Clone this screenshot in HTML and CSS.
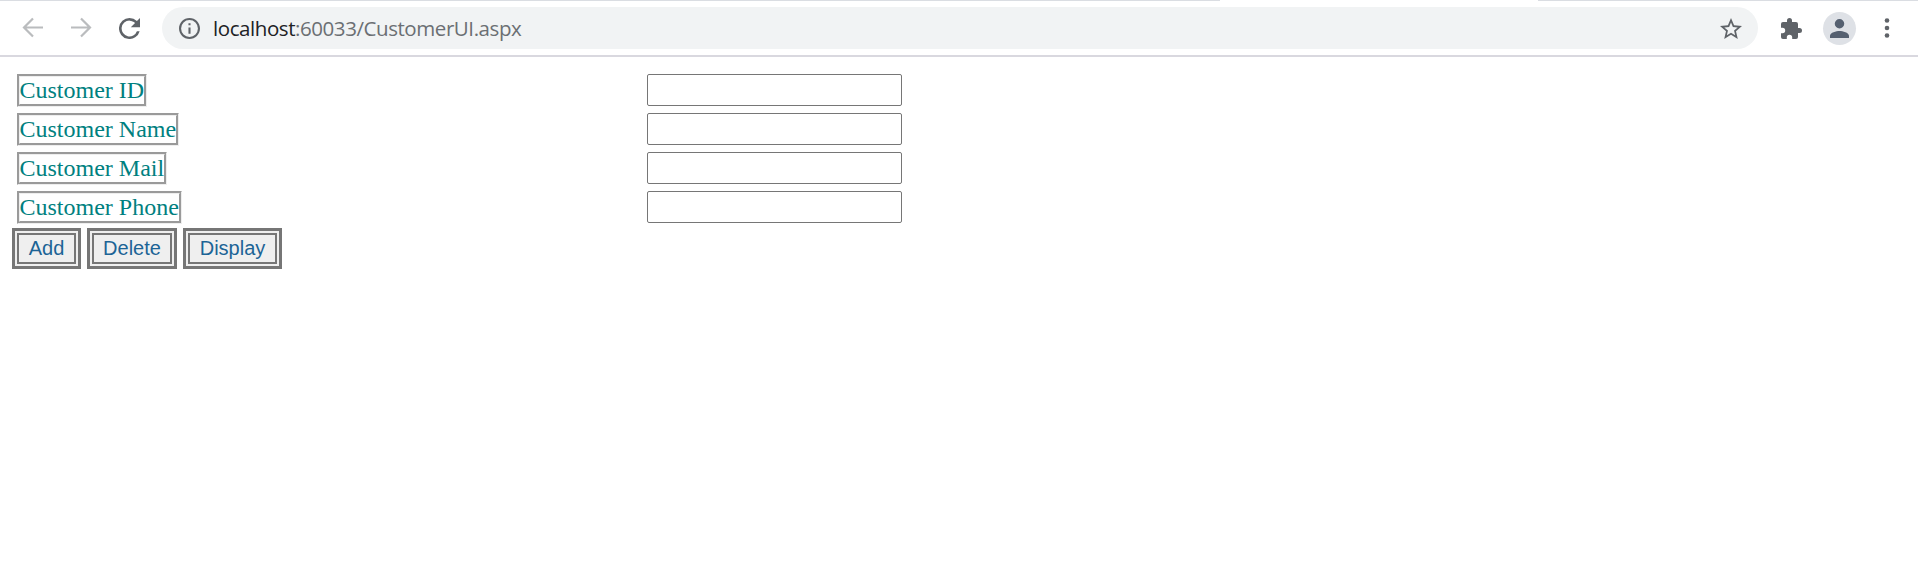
FILE: index.html
```html
<!DOCTYPE html>
<html lang="en">
<head>
<meta charset="utf-8">
<title>Customer</title>
<link rel="stylesheet" href="styles.css">
</head>
<body>
<div class="tab-edge"><span class="edge-left"></span><span class="edge-right"></span></div>
<header class="toolbar">
  <nav class="nav">
    <svg class="nav-icon faded" viewBox="0 0 22 22"><path d="M21 10.500H2.500M11 1.500l-9 9 9 9"/></svg>
    <svg class="nav-icon faded" viewBox="0 0 22 22"><path d="M1 10.500h18.500M11 1.500l9 9-9 9"/></svg>
    <svg class="nav-icon reload" viewBox="4 4 16 16"><path d="M17.650 6.350A7.960 7.960 0 0 0 12 4a8 8 0 1 0 7.730 10h-2.080A6 6 0 1 1 12 6c1.660 0 3.140.690 4.220 1.780L13 11h7V4z"/></svg>
  </nav>
  <div class="address">
    <svg class="info" viewBox="2 2 20 20"><path d="M11 17h2v-6h-2v6zm1-15C6.480 2 2 6.480 2 12s4.480 10 10 10 10-4.480 10-10S17.520 2 12 2zm0 18a8 8 0 1 1 0-16 8 8 0 0 1 0 16zM11 9h2V7h-2v2z"/></svg>
    <span class="url"><span class="host">localhost</span>:60033/CustomerUI.aspx</span>
    <svg class="star" viewBox="2 2 20 19"><path d="M22 9.240l-7.190-.620L12 2 9.190 8.630 2 9.240l5.460 4.730L5.820 21 12 17.270 18.180 21l-1.630-7.030L22 9.240zM12 15.400l-3.760 2.270 1-4.280-3.320-2.880 4.380-.380L12 6.100l1.710 4.040 4.380.380-3.320 2.880 1 4.280L12 15.400z"/></svg>
  </div>
  <svg class="puzzle" viewBox="2 1 21 21"><path d="M20.500 11H19V7a2 2 0 0 0-2-2h-4V3.500a2.500 2.500 0 0 0-5 0V5H4a2 2 0 0 0-2 2v3.800h1.500a2.700 2.700 0 0 1 0 5.400H2V20a2 2 0 0 0 2 2h3.800v-1.500a2.700 2.700 0 0 1 5.400 0V22H17a2 2 0 0 0 2-2v-4h1.500a2.500 2.500 0 0 0 0-5z"/></svg>
  <span class="avatar"><svg viewBox="4 4 16 16"><path d="M12 12a4 4 0 1 0 0-8 4 4 0 0 0 0 8zm0 2c-2.670 0-8 1.340-8 4v2h16v-2c0-2.660-5.330-4-8-4z"/></svg></span>
  <svg class="more" viewBox="0 0 6 20"><circle cx="3" cy="2.500" r="2.300"/><circle cx="3" cy="10" r="2.300"/><circle cx="3" cy="17.500" r="2.300"/></svg>
</header>
<main>
  <form class="form">
    <div class="row"><label for="id">Customer ID</label><input id="id" type="text"></div>
    <div class="row"><label for="name">Customer Name</label><input id="name" type="text"></div>
    <div class="row"><label for="mail">Customer Mail</label><input id="mail" type="text"></div>
    <div class="row"><label for="phone">Customer Phone</label><input id="phone" type="text"></div>
    <div class="actions">
      <button class="add" type="button"><span>Add</span></button>
      <button class="delete" type="button"><span>Delete</span></button>
      <button class="display" type="button"><span>Display</span></button>
    </div>
  </form>
</main>
</body>
</html>
```
FILE: styles.css
```css
* { box-sizing: border-box; }
body { margin: 0; background: #fff; overflow: hidden; font-family: "Liberation Serif", serif; }
svg { display: block; flex: none; }
.tab-edge { display: flex; justify-content: space-between; height: 1px; }
.edge-left { width: 1220px; background: #dadde2; }
.edge-right { width: 380px; background: #dadde2; }
.toolbar { display: flex; align-items: center; height: 56px; padding: 0 28px 0 22px; border-bottom: 2px solid #d9d8df; fill: #5f6368; }
.nav { display: flex; align-items: center; width: 140px; gap: 26px; }
.nav-icon { width: 22px; height: 22px; }
.faded { fill: none; stroke: #babcbe; stroke-width: 2.200; }
.reload { width: 21px; height: 21px; margin-left: 1px; }
.address { display: flex; align-items: center; width: 1596px; height: 42px; padding: 0 16px 0 17px; border-radius: 21px; background: #f1f3f4; }
.info { width: 21px; height: 21px; }
.url { margin-left: 13px; color: #6b6f73; font: 20.5px/28px "Open Sans", sans-serif; letter-spacing: -0.43px; white-space: nowrap; }
.host { color: #202124; }
.star { width: 22px; height: 21px; margin-left: auto; }
.puzzle { width: 21px; height: 21px; margin-left: 23px; }
.avatar { display: flex; align-items: center; justify-content: center; width: 33px; height: 33px; margin-left: 21px; border-radius: 50%; background: #dee1e6; }
.avatar svg { width: 19px; height: 19px; fill: #556070; }
.more { width: 6px; height: 20px; margin-left: auto; }
.form { padding: 17px 12px; }
.row { display: grid; grid-template-columns: 630px 255px; align-items: start; height: 39px; padding-left: 5px; }
.row label { justify-self: start; height: 33px; border: 3px groove #eee; color: #008080; font-size: 24px; line-height: 26px; text-indent: -0.5px; white-space: nowrap; }
.row input { width: 255px; height: 32px; border: 1px solid #767676; border-radius: 2px; background: #fff; font-size: 20px; }
.actions { display: flex; gap: 6px; margin-top: -2px; }
.actions button { height: 41px; padding: 2px; border: 3px solid #767676; border-radius: 0; background: #efefef; color: #1c6496; font: 20px/23px "Liberation Sans", sans-serif; }
.actions span { display: flex; align-items: center; justify-content: center; height: 31px; padding-bottom: 1px; border: 2px solid #767676; }
.add { width: 69px; }
.delete { width: 90px; }
.display { width: 99px; }
```
